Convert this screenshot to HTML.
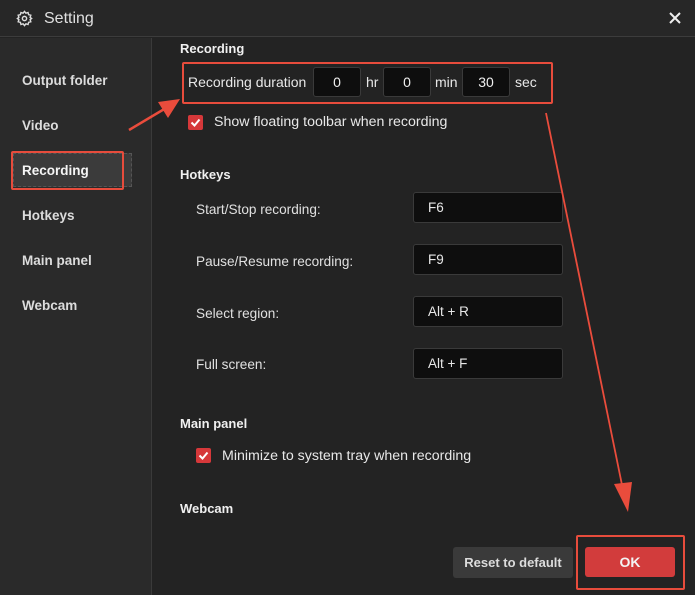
<!DOCTYPE html><html><head><style>
*{margin:0;padding:0;box-sizing:border-box}
body{width:695px;height:595px;background:#232323;font-family:"Liberation Sans",sans-serif;color:#e8e8e8;position:relative;overflow:hidden;font-size:14px}
.a{position:absolute}
.title{left:0;top:0;width:695px;height:37px;background:#272727;border-bottom:1px solid #3c3c3c}
.side{left:0;top:38px;width:152px;height:557px;background:#2a2a2a;border-right:1px solid #3a3a3a}
.nav{left:22px;font-size:13.5px;font-weight:bold;color:#dcdcdc}
.h{font-weight:bold;font-size:13px;color:#f0f0f0}
.inp{background:#0e0e0e;border:1px solid #3a3a3a;border-radius:3px;height:30px;color:#f0f0f0;text-align:center;line-height:28px;font-size:14px}
.hk{left:413px;width:150px;height:31px;background:#0e0e0e;border:1px solid #3a3a3a;border-radius:3px;padding-left:14px;line-height:29px;font-size:13.5px}
.lbl{left:196px;font-size:13.6px;color:#e0e0e0}
.cb{width:15px;height:15px;background:#d6383a;border-radius:2px}
.red{border:2px solid #e74c3c}
</style></head><body>
<div class="a title"></div>
<svg class="a" style="left:16px;top:10px" width="17" height="17" viewBox="0 0 24 24" fill="none" stroke="#ddd" stroke-width="2"><circle cx="12" cy="12" r="3"/><path d="M12 2l2 2.5 3-1 .8 3.1 3.1.8-1 3L22 12l-2.1 1.6 1 3-3.1.8-.8 3.1-3-1L12 22l-2-2.5-3 1-.8-3.1-3.1-.8 1-3L2 12l2.1-1.6-1-3 3.1-.8.8-3.1 3 1z"/></svg>
<div class="a" style="left:44px;top:10px;font-size:16px;color:#e0e0e0">Setting</div>
<svg class="a" style="left:669px;top:12px" width="12" height="12" viewBox="0 0 12 12" stroke="#eee" stroke-width="2"><path d="M1 1L11 11M11 1L1 11"/></svg>
<div class="a side"></div>
<div class="a nav" style="top:73px">Output folder</div>
<div class="a nav" style="top:118px">Video</div>
<div class="a" style="left:13px;top:153px;width:119px;height:34px;background:#3b3b3b;border:1px dashed #555"></div>
<div class="a red" style="left:11px;top:151px;width:113px;height:39px;border-radius:2px"></div>
<div class="a nav" style="top:163px;color:#f5f5f5">Recording</div>
<div class="a nav" style="top:208px">Hotkeys</div>
<div class="a nav" style="top:253px">Main panel</div>
<div class="a nav" style="top:298px">Webcam</div>

<div class="a h" style="left:180px;top:41px">Recording</div>
<div class="a red" style="left:182px;top:62px;width:371px;height:42px;border-radius:2px"></div>
<div class="a" style="left:188px;top:74px">Recording duration</div>
<div class="a inp" style="left:313px;top:67px;width:48px">0</div>
<div class="a" style="left:366px;top:74px">hr</div>
<div class="a inp" style="left:383px;top:67px;width:48px">0</div>
<div class="a" style="left:435px;top:74px">min</div>
<div class="a inp" style="left:462px;top:67px;width:48px">30</div>
<div class="a" style="left:515px;top:74px">sec</div>
<div class="a cb" style="left:188px;top:115px"></div>
<svg class="a" style="left:188px;top:115px" width="15" height="15"><path d="M3.5 7.5l3 3 5-6" stroke="#fff" stroke-width="2" fill="none"/></svg>
<div class="a" style="left:214px;top:114px;font-size:14.2px">Show floating toolbar when recording</div>

<div class="a h" style="left:180px;top:167px">Hotkeys</div>
<div class="a lbl" style="top:202px">Start/Stop recording:</div>
<div class="a hk" style="top:192px">F6</div>
<div class="a lbl" style="top:254px">Pause/Resume recording:</div>
<div class="a hk" style="top:244px">F9</div>
<div class="a lbl" style="top:306px">Select region:</div>
<div class="a hk" style="top:296px">Alt + R</div>
<div class="a lbl" style="top:357px">Full screen:</div>
<div class="a hk" style="top:348px">Alt + F</div>

<div class="a h" style="left:180px;top:416px">Main panel</div>
<div class="a cb" style="left:196px;top:448px"></div>
<svg class="a" style="left:196px;top:448px" width="15" height="15"><path d="M3.5 7.5l3 3 5-6" stroke="#fff" stroke-width="2" fill="none"/></svg>
<div class="a" style="left:222px;top:448px;font-size:14.2px">Minimize to system tray when recording</div>
<div class="a h" style="left:180px;top:501px">Webcam</div>

<div class="a" style="left:453px;top:547px;width:120px;height:31px;background:#3a3a3a;border-radius:3px;text-align:center;line-height:31px;font-weight:bold;color:#dcdcdc;font-size:13px">Reset to default</div>
<div class="a red" style="left:576px;top:535px;width:109px;height:55px;border-radius:2px"></div>
<div class="a" style="left:585px;top:547px;width:90px;height:30px;background:#d23c3c;border-radius:3px;text-align:center;line-height:30px;font-weight:bold;color:#f3f3f3">OK</div>

<svg class="a" style="left:0;top:0" width="695" height="595">
<line x1="129" y1="130" x2="166" y2="108" stroke="#ea4c3c" stroke-width="2.5"/>
<polygon points="180,99 158,102 168,118" fill="#ea4c3c"/>
<line x1="546" y1="113" x2="622" y2="485" stroke="#ea4c3c" stroke-width="1.8"/>
<polygon points="628,512 614,484 632,482" fill="#ea4c3c"/>
</svg>
</body></html>
